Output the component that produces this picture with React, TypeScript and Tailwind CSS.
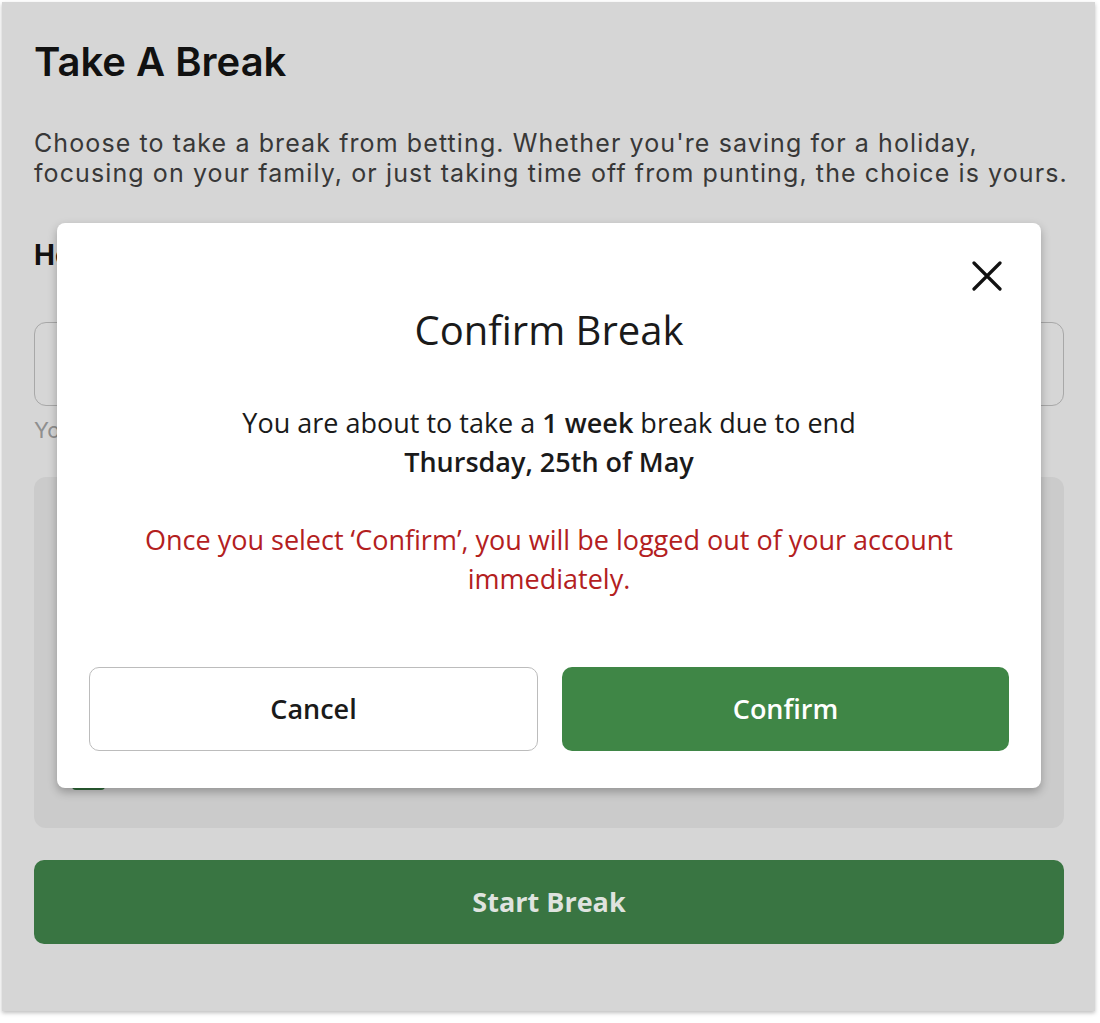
import React from "react";

const page = { fontFamily: "Inter, 'Noto Sans', sans-serif" };
const modalFont = { fontFamily: "'Open Sans', 'Noto Sans', sans-serif" };

function CloseIcon() {
  return (
    <svg width="30" height="30" viewBox="0 0 30 30" fill="none">
      <path d="M2 2 L28 28 M28 2 L2 28" stroke="#111" strokeWidth="3.2" strokeLinecap="round" />
    </svg>
  );
}

function ConfirmModal() {
  return (
    <div
      className="absolute left-[55px] top-[221px] w-[984px] h-[565px] bg-white rounded-[8px] shadow-[0_4px_10px_rgba(0,0,0,0.28)] px-8 pt-[83px] pb-[37px] flex flex-col text-center text-[#1a1a1a]"
      style={modalFont}
    >
      <button className="absolute top-[38px] right-[39px]">
        <CloseIcon />
      </button>

      <h2 className="text-[40px] leading-[48px] font-medium">Confirm Break</h2>

      <p className="mt-[49px] text-[27px] leading-[39px]">
        You are about to take a <span className="font-semibold">1 week</span> break due to end
        <br />
        <span className="font-semibold">Thursday, 25th of May</span>
      </p>

      <p className="mt-[39px] text-[27px] leading-[39px] text-[#b3201e] px-[40px]">
        Once you select ‘Confirm’, you will be logged out of your account immediately.
      </p>

      <div className="mt-[69px] flex gap-6">
        <button className="flex-1 h-[84px] rounded-[10px] border border-[#bcbcbc] bg-white text-[27px] font-semibold text-[#1a1a1a]">
          Cancel
        </button>
        <button className="flex-1 h-[84px] rounded-[10px] bg-[#3f8646] text-[27px] font-semibold text-white">
          Confirm
        </button>
      </div>
    </div>
  );
}

export default function App() {
  return (
    <div className="min-h-screen bg-white pt-[2px] pl-[2px]">
      <div
        className="relative w-[1093px] h-[1009px] bg-[#d6d6d6] pl-8 pr-[31px] pt-[36px] shadow-[0_2px_4px_rgba(0,0,0,0.25)]"
        style={page}
      >
        <h1 className="text-[40px] leading-[48px] font-semibold text-[#111]">Take A Break</h1>

        <p className="mt-[42px] mr-[-20px] whitespace-nowrap text-[25px] leading-[30px] tracking-[1.1px] text-[#383838]">
          Choose to take a break from betting. Whether you're saving for a holiday,
          <br />
          focusing on your family, or just taking time off from punting, the choice is yours.
        </p>

        <h3 className="mt-[50px] text-[28px] leading-[34px] font-bold text-[#111]">
          How long would you like a break for?
        </h3>

        <div className="mt-[50px] h-[84px] rounded-[12px] border border-[#a8a8a8] px-6 flex items-center text-[24px] text-[#333]">
          1 Week
        </div>
        <p className="mt-[10px] text-[22px] leading-[28px] text-[#8f8f8f]">
          Your break will end on Thursday, 25th of May
        </p>

        <div className="mt-[33px] h-[351px] rounded-[12px] bg-[#cbcbcb] px-[38px] pt-[30px] pb-[38px] flex flex-col justify-between">
          <p className="text-[22px] leading-[30px] text-[#333]">
            During your break you will not be able to log in, place bets or make deposits.
          </p>
          <div className="flex items-center gap-4">
            <span className="w-[33px] h-[33px] rounded-[4px] bg-[#2f6a3a]" />
            <span className="text-[22px] text-[#333]">I understand</span>
          </div>
        </div>

        <button
          className="mt-8 w-full h-[84px] rounded-[10px] bg-[#397542] text-[27px] font-bold text-[#dfe3df]"
          style={modalFont}
        >
          Start Break
        </button>

        <ConfirmModal />
      </div>
    </div>
  );
}
